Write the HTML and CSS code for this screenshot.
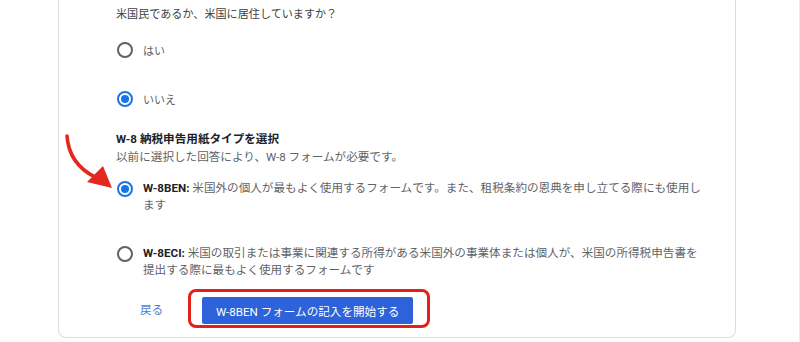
FILE: index.html
```html
<!DOCTYPE html>
<html lang="ja">
<head>
<meta charset="utf-8">
<title>W-8 納税申告用紙タイプを選択</title>
<link rel="stylesheet" href="styles.css">
</head>
<body>
<div class="page">
  <div class="card">
    <p class="question">米国民であるか、米国に居住していますか？</p>
    <div class="choices">
      <label class="choice">
        <span class="radio"></span>
        <span class="choice-label">はい</span>
      </label>
      <label class="choice choice-second">
        <span class="radio radio-on"></span>
        <span class="choice-label">いいえ</span>
      </label>
    </div>

    <h2 class="section-title">W-8 納税申告用紙タイプを選択</h2>
    <p class="section-sub">以前に選択した回答により、W-8 フォームが必要です。</p>

    <label class="form-option">
      <span class="radio radio-on"></span>
      <span class="form-text"><b>W-8BEN:</b> 米国外の個人が最もよく使用するフォームです。また、租税条約の恩典を申し立てる際にも使用します</span>
    </label>
    <label class="form-option form-option-second">
      <span class="radio"></span>
      <span class="form-text"><b>W-8ECI:</b> 米国の取引または事業に関連する所得がある米国外の事業体または個人が、米国の所得税申告書を提出する際に最もよく使用するフォームです</span>
    </label>

    <div class="actions">
      <button class="btn-text" type="button">戻る</button>
      <div class="btn-wrap">
        <button class="btn-primary" type="button">W-8BEN フォームの記入を開始する</button>
        <span class="highlight"></span>
      </div>
    </div>
  </div>

  <svg class="arrow" width="130" height="200" viewBox="0 0 130 200" aria-hidden="true">
    <path d="M67 136 Q69 164 95 177" fill="none" stroke="#e5281f" stroke-width="3.6" stroke-linecap="round"/>
    <polygon points="112,188 87,182 103,166" fill="#e5281f"/>
  </svg>
</div>
</body>
</html>
```

FILE: styles.css
```css
* { box-sizing: border-box; }

html, body {
  margin: 0;
  padding: 0;
  background: #ffffff;
}

body {
  font-family: Roboto, "Noto Sans CJK JP", sans-serif;
  color: #3c4043;
  font-size: 11.6px;
}

.page {
  position: relative;
  width: 800px;
  height: 342px;
  overflow: hidden;
  border-right: 1px solid #ececec;
}

.card {
  margin-left: 58px;
  width: 678px;
  border: 1px solid #dadce0;
  border-top: none;
  border-radius: 0 0 8px 8px;
  padding: 6px 0 13px 57px;
}

.question {
  margin: 0;
  font-size: 11.1px;
  line-height: 18px;
  color: #3c4043;
}

.choices {
  margin-top: 16px;
}

.choice {
  display: flex;
  align-items: center;
  height: 20px;
  gap: 10px;
  padding-left: 1px;
}

.choice-second {
  margin-top: 29px;
}

.choice-label {
  font-size: 11px;
  color: #5f6368;
}

.radio {
  flex: none;
  width: 16px;
  height: 16px;
  border: 2px solid #5f6368;
  border-radius: 50%;
  display: flex;
  align-items: center;
  justify-content: center;
}

.radio-on {
  border-color: #1a73e8;
}

.radio-on::after {
  content: "";
  width: 8px;
  height: 8px;
  border-radius: 50%;
  background: #1a73e8;
}

.section-title {
  margin: 21px 0 0;
  font-size: 11.6px;
  font-weight: 700;
  line-height: 18px;
  color: #202124;
}

.section-sub {
  margin: 0;
  font-size: 11.6px;
  line-height: 18px;
  color: #5f6368;
}

.form-option {
  display: flex;
  align-items: flex-start;
  gap: 10px;
  margin-top: 14px;
  padding-left: 1px;
}

.form-option .radio {
  margin-top: 1px;
}

.form-option-second {
  margin-top: 31px;
}

.form-text {
  width: 563px;
  line-height: 17px;
  color: #5f6368;
}

.form-text b {
  color: #202124;
  font-weight: 700;
}

.actions {
  display: flex;
  align-items: center;
  margin-top: 18px;
  padding-left: 24px;
  gap: 39px;
}

.btn-text {
  border: none;
  background: none;
  padding: 0;
  font-family: inherit;
  font-size: 11.6px;
  color: #4a7fd9;
  line-height: 27px;
}

.btn-wrap {
  position: relative;
}

.btn-primary {
  display: block;
  width: 211px;
  height: 27px;
  border: none;
  border-radius: 2px;
  background: #2d62d8;
  color: #ffffff;
  font-family: inherit;
  font-size: 11.6px;
  font-weight: 400;
  padding: 0;
  text-align: center;
}

.highlight {
  position: absolute;
  top: -8px;
  left: -14px;
  right: -17px;
  bottom: -4px;
  border: 3px solid #e3201b;
  border-radius: 8px;
  pointer-events: none;
}

.arrow {
  position: absolute;
  left: 0;
  top: 0;
}
```
